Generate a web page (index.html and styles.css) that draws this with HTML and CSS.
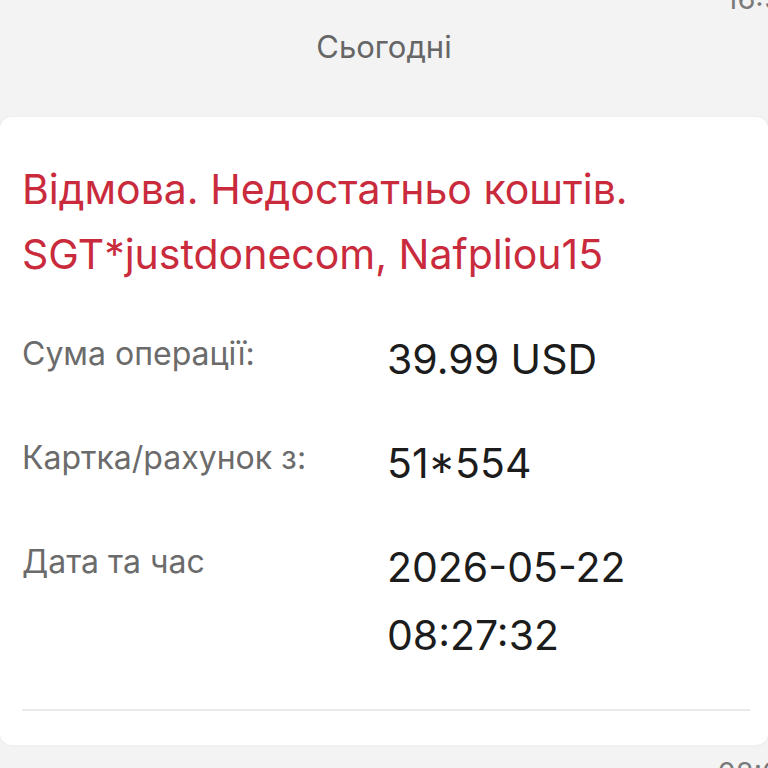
FILE: index.html
```html
<!DOCTYPE html>
<html lang="uk">
<head>
<meta charset="utf-8">
<link rel="stylesheet" href="styles.css">
</head>
<body>
<div class="page">
  <div class="time-row time-prev"><span class="time">16:55</span></div>
  <div class="day">Сьогодні</div>
  <div class="card">
    <div class="title">Відмова. Недостатньо коштів. SGT*justdonecom, Nafpliou15</div>
    <div class="details">
      <div class="label">Сума операції:</div>
      <div class="value">39.99 USD</div>
      <div class="label">Картка/рахунок з:</div>
      <div class="value">51*554</div>
      <div class="label">Дата та час</div>
      <div class="value">2026-05-22<br>08:27:32</div>
    </div>
    <div class="divider"></div>
  </div>
  <div class="time-row time-next"><span class="time">08:05</span></div>
</div>
</body>
</html>
```
FILE: styles.css
```css
html, body {
  margin: 0;
  padding: 0;
  background: #f3f3f3;
  overflow: hidden;
}
.page {
  width: 768px;
  height: 768px;
  overflow: hidden;
  font-family: Inter, Roboto, sans-serif;
}
.time-row {
  display: flex;
  justify-content: flex-end;
}
.time {
  font-size: 29px;
  line-height: 30px;
  color: #7a7a7a;
}
.time-prev {
  margin-top: -16px;
}
.time-prev .time {
  margin-right: -31px;
}
.day {
  text-align: center;
  font-size: 31px;
  line-height: 40px;
  color: #666666;
  margin-top: 13px;
}
.card {
  margin-top: 50px;
  background: #ffffff;
  border-radius: 12px;
  padding: 40px 18px 34px 22px;
  box-shadow: 0 0 4px rgba(0,0,0,0.04);
}
.title {
  color: #c92b3d;
  font-size: 41px;
  line-height: 65px;
  margin-bottom: 38px;
}
.details {
  display: grid;
  grid-template-columns: 365px 1fr;
  row-gap: 36px;
  align-items: start;
}
.label {
  font-size: 32px;
  line-height: 58px;
  color: #6b6b6b;
}
.value {
  font-size: 41px;
  line-height: 68px;
  color: #1c1c1c;
}
.divider {
  height: 2px;
  background: #e9e9e9;
  margin-top: 40px;
}
.time-next {
  margin-top: 13px;
}
.time-next .time {
  margin-right: -30px;
}
```
